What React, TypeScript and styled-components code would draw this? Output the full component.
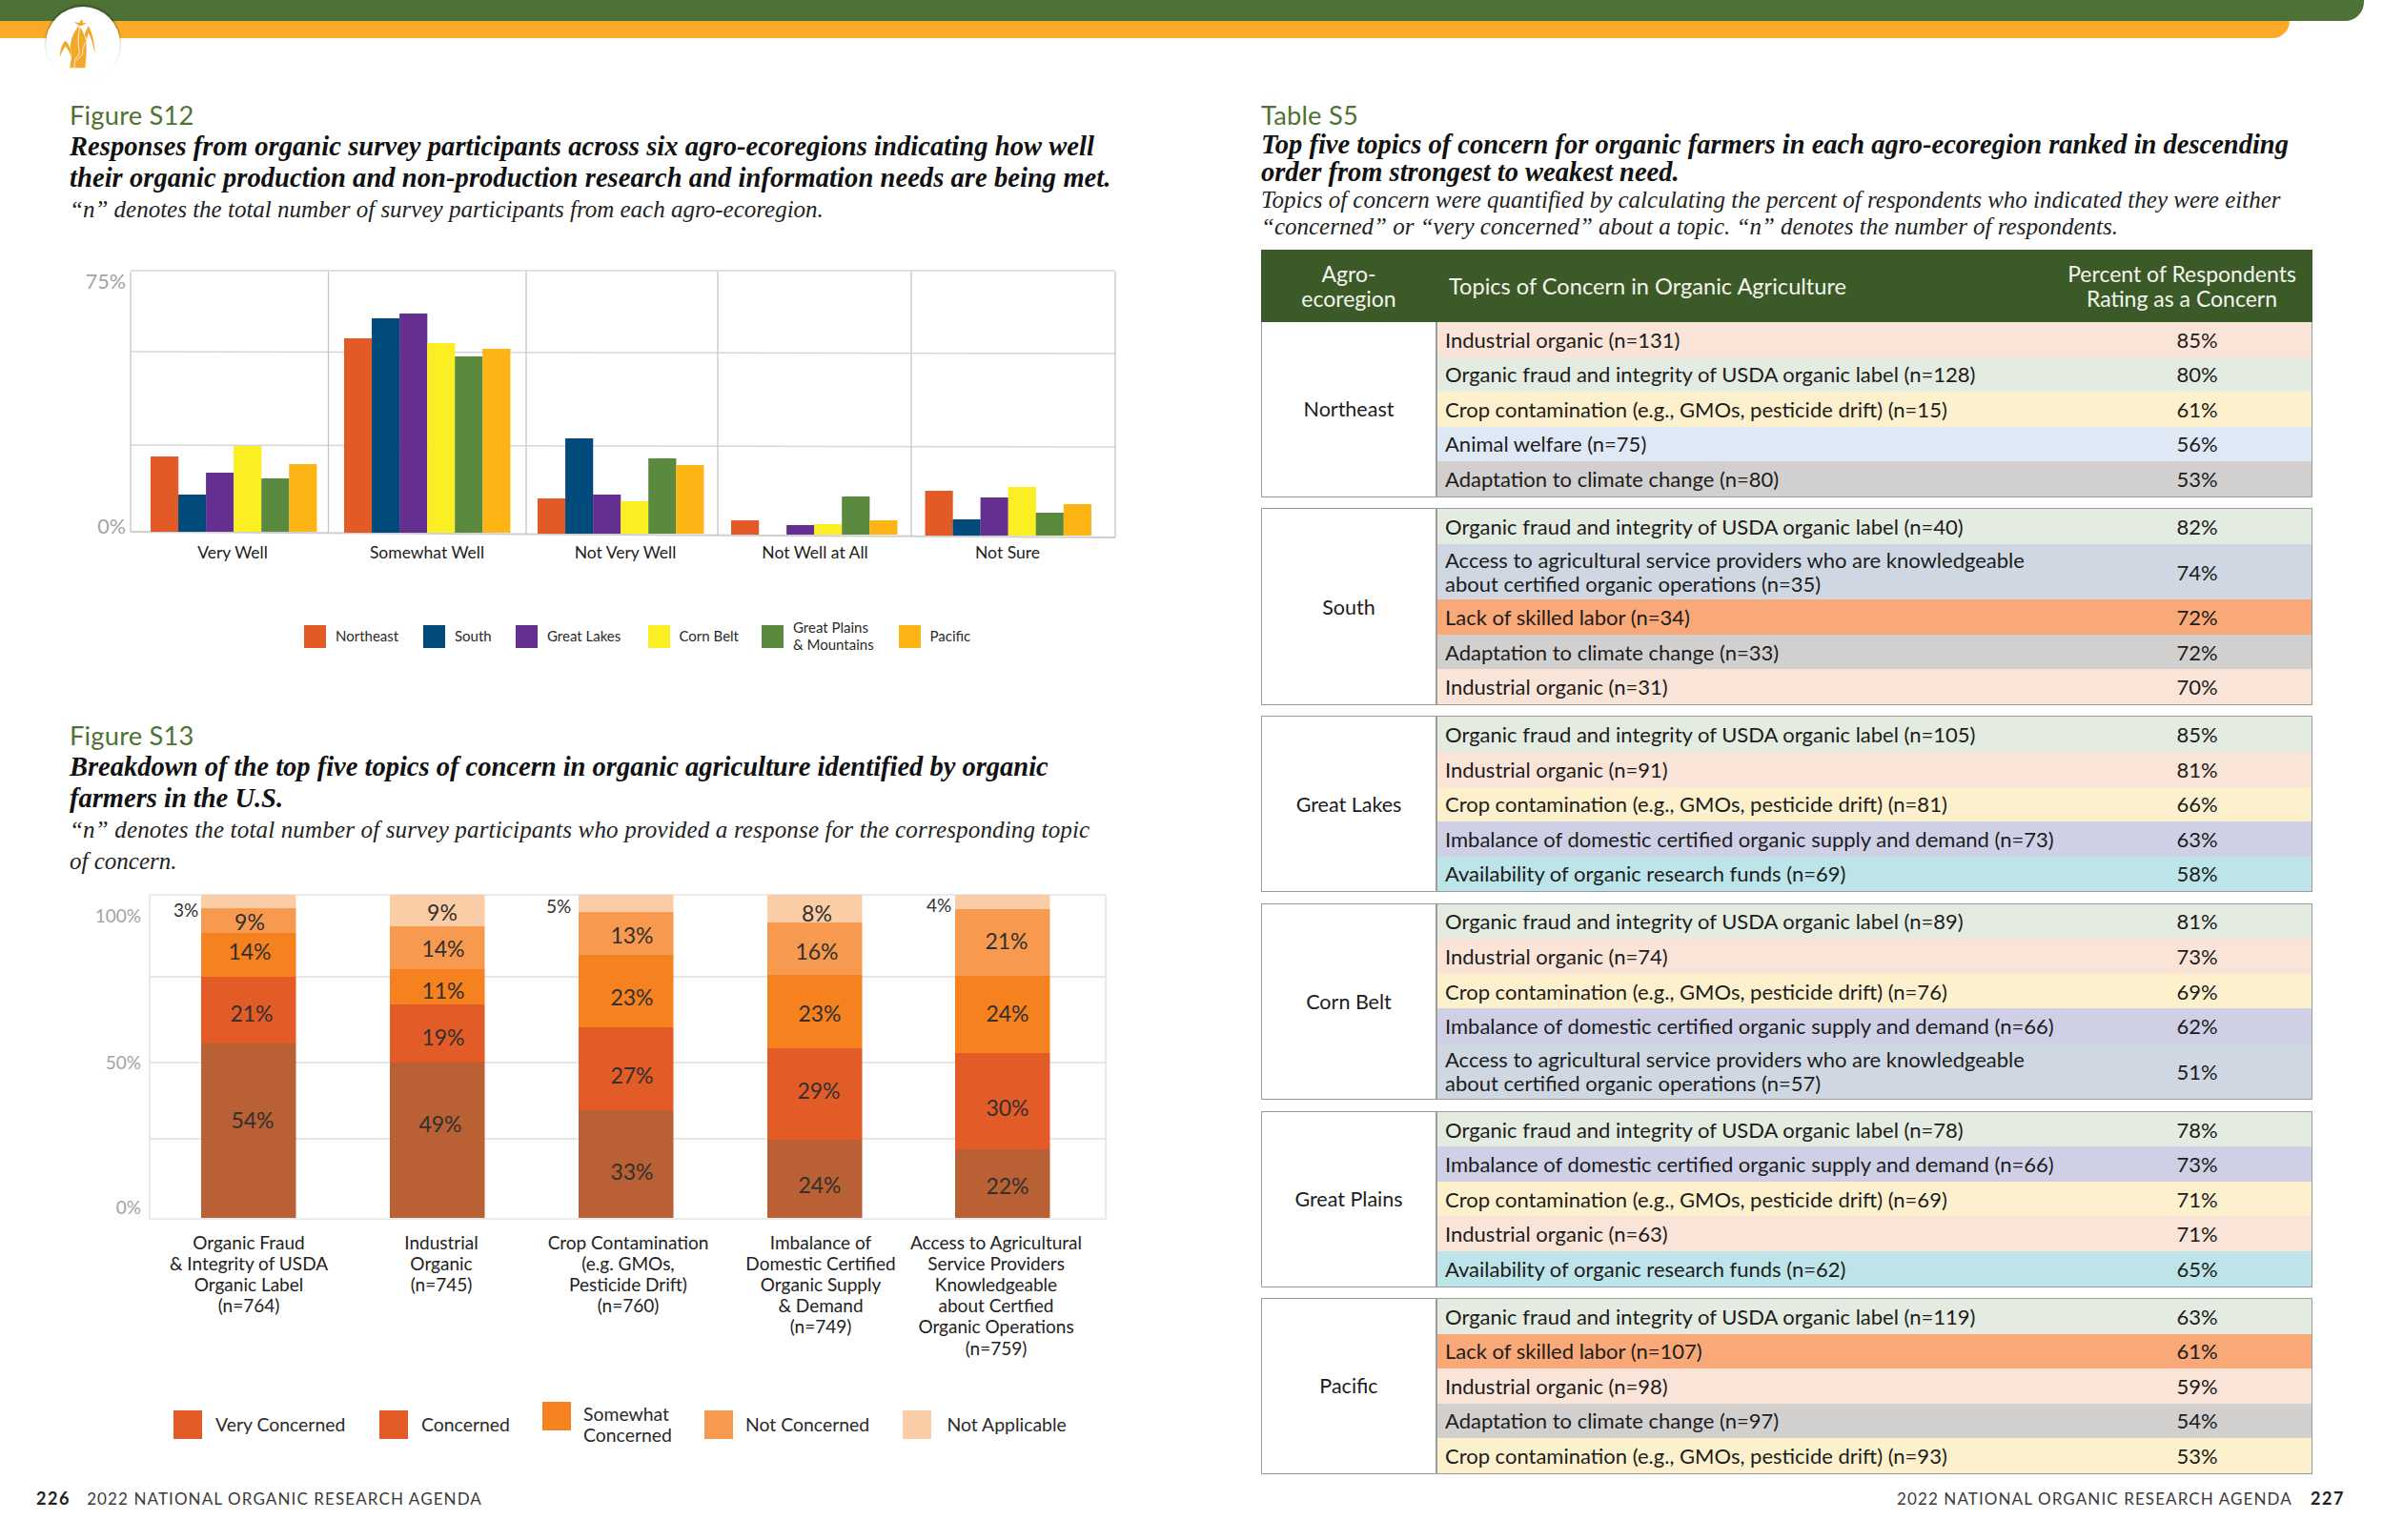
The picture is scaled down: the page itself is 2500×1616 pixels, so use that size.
import { FC } from 'react';
import styled, { createGlobalStyle } from 'styled-components';

const GlobalStyle = createGlobalStyle`
  html, body { margin: 0; padding: 0; background: #fff; }
  body { font-family: Lato, "Liberation Sans", sans-serif; color: #1c1c1c; }
`;

const Page = styled.div`
  width: 2500px;
  height: 1616px;
  overflow: hidden;
  position: relative;
  background: #fff;
`;

const TopBands = styled.header`
  height: 40px;
`;

const GreenBand = styled.div`
  width: 2480px;
  height: 22px;
  background: #4e7236;
  border-bottom-right-radius: 20px;
`;

const OrangeBand = styled.div`
  width: 2402px;
  height: 18px;
  background: #fbaa27;
  border-bottom-right-radius: 20px;
`;

const LogoBadge = styled.div`
  position: absolute;
  left: 48px;
  top: 7px;
  width: 78px;
  height: 78px;
  border-radius: 50%;
  background: #fff;
  box-shadow: 0 -2px 2px rgba(40, 50, 20, 0.5);
`;

const LogoMark = styled.svg`
  position: absolute;
  left: 60px;
  top: 20px;
  width: 43px;
  height: 53px;
`;

const Spreads = styled.div`
  display: grid;
  grid-template-columns: 1323px 1177px;
  height: 1576px;
`;

const LeftPage = styled.section`
  padding: 64px 0 0 73px;
  position: relative;
`;

const RightPage = styled.section`
  padding: 65px 0 0 0;
  width: 1103px;
  position: relative;
`;

const FigureTitle = styled.h2<{ $top?: number; $lh?: number }>`
  margin: ${(p) => p.$top ?? 0}px 0 0;
  font-size: 27.3px;
  line-height: ${(p) => p.$lh ?? 33}px;
  font-weight: 400;
  color: #4f7233;
  letter-spacing: 0.2px;
`;

const Lead = styled.p<{ $lh?: number; $spacing?: number }>`
  margin: 0;
  font-family: 'Liberation Serif', serif;
  font-style: italic;
  font-weight: 700;
  font-size: 28.5px;
  line-height: ${(p) => p.$lh ?? 33}px;
  letter-spacing: ${(p) => p.$spacing ?? 0}px;
  color: #111;
  white-space: nowrap;
`;

const Note = styled.p<{ $lh?: number; $spacing?: number }>`
  margin: 0;
  font-family: 'Liberation Serif', serif;
  font-style: italic;
  font-size: 25px;
  line-height: ${(p) => p.$lh ?? 33}px;
  letter-spacing: ${(p) => p.$spacing ?? 0}px;
  color: #222;
  white-space: nowrap;
`;

const ChartSvg = styled.svg<{ $top: number }>`
  display: block;
  overflow: visible;
  margin-top: ${(p) => p.$top}px;
`;

const YTick = styled.text<{ $size: number }>`
  font-family: Lato, sans-serif;
  font-size: ${(p) => p.$size}px;
  fill: #a3a3a3;
  text-anchor: end;
  dominant-baseline: central;
`;

const CategoryLabel = styled.text<{ $size: number }>`
  font-family: Lato, sans-serif;
  font-size: ${(p) => p.$size}px;
  fill: #222;
  text-anchor: middle;
  dominant-baseline: central;
`;

const ValueLabel = styled.text<{ $small?: boolean }>`
  font-family: Lato, sans-serif;
  font-size: ${(p) => (p.$small ? 19 : 23)}px;
  fill: #33302e;
  text-anchor: middle;
  dominant-baseline: central;
`;

const Legend = styled.div<{ $top: number; $left: number; $size: number }>`
  display: flex;
  align-items: center;
  margin: ${(p) => p.$top}px 0 0 ${(p) => p.$left}px;
  font-size: ${(p) => p.$size}px;
  color: #2a2a2a;
`;

const LegendItem = styled.div<{ $width: number; $gap: number }>`
  display: flex;
  align-items: center;
  gap: ${(p) => p.$gap}px;
  width: ${(p) => p.$width}px;
`;

const Swatch = styled.span<{ $color: string; $w: number; $h: number; $raised?: boolean }>`
  flex: none;
  width: ${(p) => p.$w}px;
  height: ${(p) => p.$h}px;
  background: ${(p) => p.$color};
  margin-bottom: ${(p) => (p.$raised ? 18 : 0)}px;
`;

const LegendText = styled.span<{ $lh: number }>`
  line-height: ${(p) => p.$lh}px;
  white-space: pre-line;
`;

const Footer = styled.footer<{ $right?: boolean }>`
  position: absolute;
  top: 1521px;
  display: flex;
  align-items: center;
  gap: 17px;
  font-size: 17px;
  letter-spacing: 1.1px;
  color: #3a3a3a;
  white-space: nowrap;
  ${(p) => (p.$right ? 'right: -34px; gap: 19px;' : 'left: 38px;')}
`;

const Folio = styled.b`
  font-weight: 700;
  font-size: 18px;
  color: #222;
  letter-spacing: 1.6px;
`;

const TableHead = styled.div`
  display: grid;
  grid-template-columns: 184px 1fr 240px;
  margin-top: 9.4px;
  height: 76px;
  background: #3c5a27;
  color: #f3f5ee;
  font-size: 23px;
  align-items: center;
`;

const HeadCell = styled.div<{ $center?: boolean }>`
  text-align: ${(p) => (p.$center ? 'center' : 'left')};
  padding-left: ${(p) => (p.$center ? 0 : 13)}px;
  line-height: 26px;
  white-space: pre-line;
`;

const TopicHead = styled(HeadCell)`
  font-size: 23.6px;
`;

const PercentHead = styled(HeadCell)`
  margin-left: -34px;
`;

const RegionGroup = styled.div<{ $first?: boolean }>`
  display: grid;
  grid-template-columns: 184px 1fr;
  border: 1.5px solid #9b9b9b;
  border-top-width: ${(p) => (p.$first ? 0 : 1.5)}px;
  margin-top: ${(p) => (p.$first ? 0 : 11.5)}px;
`;

const RegionName = styled.div`
  display: flex;
  align-items: center;
  justify-content: center;
  border-right: 2px solid #9b9b9b;
  font-size: 21.5px;
  color: #1c1c1c;
`;

const Rows = styled.div`
  display: flex;
  flex-direction: column;
`;

const Row = styled.div<{ $bg: string; $tall?: boolean }>`
  display: grid;
  grid-template-columns: 1fr 240px;
  align-items: center;
  height: ${(p) => (p.$tall ? 58.5 : 36.55)}px;
  background: ${(p) => p.$bg};
  font-size: 22px;
  color: #1c1c1c;
`;

const RowTopic = styled.div`
  padding-left: 8px;
  line-height: 25px;
  white-space: pre-line;
`;

const RowValue = styled.div`
  text-align: center;
`;

const TOPIC_BG = {
  industrial: '#fae3d7',
  fraud: '#e4ebe0',
  crop: '#fdf1cd',
  animal: '#dfe8f5',
  adaptation: '#d2cfcf',
  access: '#cfd8e2',
  labor: '#f9a877',
  imbalance: '#cfd0e6',
  funds: '#bde4e8',
};
type Topic = keyof typeof TOPIC_BG;

const topicLabel = (t: Topic, n: number) => {
  switch (t) {
    case 'industrial':
      return `Industrial organic (n=${n})`;
    case 'fraud':
      return `Organic fraud and integrity of USDA organic label (n=${n})`;
    case 'crop':
      return `Crop contamination (e.g., GMOs, pesticide drift) (n=${n})`;
    case 'animal':
      return `Animal welfare (n=${n})`;
    case 'adaptation':
      return `Adaptation to climate change (n=${n})`;
    case 'access':
      return `Access to agricultural service providers who are knowledgeable\nabout certified organic operations (n=${n})`;
    case 'labor':
      return `Lack of skilled labor (n=${n})`;
    case 'imbalance':
      return `Imbalance of domestic certified organic supply and demand (n=${n})`;
    default:
      return `Availability of organic research funds (n=${n})`;
  }
};

const REGIONS: Array<{ name: string; rows: Array<[Topic, number, number]> }> = [
  {
    name: 'Northeast',
    rows: [['industrial', 131, 85], ['fraud', 128, 80], ['crop', 15, 61], ['animal', 75, 56], ['adaptation', 80, 53]],
  },
  {
    name: 'South',
    rows: [['fraud', 40, 82], ['access', 35, 74], ['labor', 34, 72], ['adaptation', 33, 72], ['industrial', 31, 70]],
  },
  {
    name: 'Great Lakes',
    rows: [['fraud', 105, 85], ['industrial', 91, 81], ['crop', 81, 66], ['imbalance', 73, 63], ['funds', 69, 58]],
  },
  {
    name: 'Corn Belt',
    rows: [['fraud', 89, 81], ['industrial', 74, 73], ['crop', 76, 69], ['imbalance', 66, 62], ['access', 57, 51]],
  },
  {
    name: 'Great Plains',
    rows: [['fraud', 78, 78], ['imbalance', 66, 73], ['crop', 69, 71], ['industrial', 63, 71], ['funds', 62, 65]],
  },
  {
    name: 'Pacific',
    rows: [['fraud', 119, 63], ['labor', 107, 61], ['industrial', 98, 59], ['adaptation', 97, 54], ['crop', 93, 53]],
  },
];

const S12_COLORS = ['#e25b26', '#004a7c', '#642f90', '#fbee23', '#5a8a3e', '#fdb515'];
const S12_GROUPS = [
  { label: 'Very Well', cx: 244, x: 158, base: 558, heights: [79, 39, 62, 90, 56, 71] },
  { label: 'Somewhat Well', cx: 448, x: 361, base: 559, heights: [204, 225, 230, 199, 185, 193] },
  { label: 'Not Very Well', cx: 656, x: 564, base: 560, heights: [37, 100, 41, 34, 79, 72] },
  { label: 'Not Well at All', cx: 855, x: 767, base: 561, heights: [15, 0, 10, 11, 40, 15] },
  { label: 'Not Sure', cx: 1057, x: 970.5, base: 562, heights: [47, 17, 40, 51, 24, 33] },
];

const S12_LEGEND = [
  { label: 'Northeast', width: 125 },
  { label: 'South', width: 97 },
  { label: 'Great Lakes', width: 138.5 },
  { label: 'Corn Belt', width: 119.5 },
  { label: 'Great Plains\n& Mountains', width: 143.5 },
  { label: 'Pacific', width: 100 },
];

const S13_COLORS = ['#fbcda7', '#f79a4f', '#f5811f', '#e35b27', '#b96034'];
const S13_BARS = [
  {
    x: 211,
    cuts: [938, 952, 978, 1024, 1094, 1277],
    lines: ['Organic Fraud', '& Integrity of USDA', 'Organic Label', '(n=764)'],
    cx: 261,
    outside: ['3%', 195, 953],
    values: [['9%', 262, 966], ['14%', 262, 997], ['21%', 264, 1062], ['54%', 265, 1174]],
  },
  {
    x: 409,
    cuts: [938, 971, 1016, 1053, 1114, 1277],
    lines: ['Industrial', 'Organic', '(n=745)'],
    cx: 463,
    values: [['9%', 464, 956], ['14%', 465, 994], ['11%', 465, 1038], ['19%', 465, 1087], ['49%', 462, 1178]],
  },
  {
    x: 607,
    cuts: [938, 956, 1001, 1077, 1164, 1277],
    lines: ['Crop Contamination', '(e.g. GMOs,', 'Pesticide Drift)', '(n=760)'],
    cx: 659,
    outside: ['5%', 586, 949],
    values: [['13%', 663, 980], ['23%', 663, 1045], ['27%', 663, 1127], ['33%', 663, 1228]],
  },
  {
    x: 805,
    cuts: [938, 967, 1022, 1099, 1195, 1277],
    lines: ['Imbalance of', 'Domestic Certified', 'Organic Supply', '& Demand', '(n=749)'],
    cx: 861,
    values: [['8%', 857, 957], ['16%', 857, 997], ['23%', 860, 1062], ['29%', 859, 1143], ['24%', 860, 1242]],
  },
  {
    x: 1002,
    cuts: [938, 953, 1023, 1104, 1205, 1277],
    lines: ['Access to Agricultural', 'Service Providers', 'Knowledgeable', 'about Certfied', 'Organic Operations', '(n=759)'],
    cx: 1045,
    outside: ['4%', 985, 948],
    values: [['21%', 1056, 986], ['24%', 1057, 1062], ['30%', 1057, 1161], ['22%', 1057, 1243]],
  },
];

const S13_LEGEND = [
  { label: 'Very Concerned', color: '#e35b27', width: 216, gap: 14.5 },
  { label: 'Concerned', color: '#e35b27', width: 171, gap: 14.5 },
  { label: 'Somewhat\nConcerned', color: '#f5811f', width: 170, gap: 13.5, raised: true },
  { label: 'Not Concerned', color: '#f79a4f', width: 208, gap: 13.5 },
  { label: 'Not Applicable', color: '#fbcda7', width: 180, gap: 17 },
];

const SurveyChart: FC = () => (
  <ChartSvg $top={34} width={1110} height={325} viewBox="73 270 1110 325">
    {[[284, 284], [369, 371], [467, 469]].map(([a, b]) => (
      <line key={a} x1={137} y1={a} x2={1170} y2={b} stroke="#d6d6d6" strokeWidth={1.5} />
    ))}
    <line x1={137} y1={558} x2={1170} y2={564} stroke="#cfcfcf" strokeWidth={2} />
    {[[137, 558], [344.5, 559], [552, 561], [753, 562], [956, 563], [1170, 564]].map(([x, bottom]) => (
      <line key={x} x1={x} y1={285} x2={x} y2={bottom} stroke="#c6c6c6" strokeWidth={1.3} />
    ))}
    <YTick $size={21.5} x={132} y={295}>75%</YTick>
    <YTick $size={21.5} x={132} y={552}>0%</YTick>
    {S12_GROUPS.map((g) => (
      <g key={g.label}>
        {g.heights.map((h, i) => (
          <rect key={i} x={g.x + i * 29.05} y={g.base - h} width={29.2} height={h} fill={S12_COLORS[i]} />
        ))}
        <CategoryLabel $size={17.5} x={g.cx} y={579}>{g.label}</CategoryLabel>
      </g>
    ))}
  </ChartSvg>
);

const ConcernChart: FC = () => (
  <ChartSvg $top={11} width={1110} height={495} viewBox="73 930 1110 495">
    <rect x={157} y={938} width={1003} height={340} fill="none" stroke="#e4e4e4" strokeWidth={1.5} />
    {[1024, 1114, 1194].map((y) => (
      <line key={y} x1={157} y1={y} x2={1160} y2={y} stroke="#e6e6e6" strokeWidth={2} />
    ))}
    <YTick $size={19} x={148} y={959}>100%</YTick>
    <YTick $size={19} x={148} y={1113}>50%</YTick>
    <YTick $size={19} x={148} y={1265}>0%</YTick>
    {S13_BARS.map((b) => (
      <g key={b.x}>
        {S13_COLORS.map((c, i) => (
          <rect key={c} x={b.x} y={b.cuts[i]} width={99.5} height={b.cuts[i + 1] - b.cuts[i]} fill={c} />
        ))}
        {b.outside && (
          <ValueLabel $small x={b.outside[1]} y={b.outside[2]}>{b.outside[0]}</ValueLabel>
        )}
        {b.values.map(([text, x, y]) => (
          <ValueLabel key={text as string} x={x} y={y}>{text}</ValueLabel>
        ))}
        {b.lines.map((line, i) => (
          <CategoryLabel key={line} $size={19} x={b.cx} y={1302 + i * 22.2}>{line}</CategoryLabel>
        ))}
      </g>
    ))}
  </ChartSvg>
);

const CornLogo: FC = () => (
  <LogoMark viewBox="180 60 129 159">
    <g fill="#f3a72b">
      <path d="M233 69 L249 72 L257 61 L262 73 L273 72 L259 80 L249 81 Z" />
      <path d="M248 82 C232 100 222 125 222 145 C222 165 228 180 222 195 L220 214 L268 214 L272 170 L272 135 C268 112 258 92 248 82 Z" />
      <path d="M189 180 C188 156 196 136 206 128 C214 134 220 146 224 162 L224 178 C219 164 212 152 206 146 C199 154 193 166 189 180 Z" />
      <path d="M266 108 L277 82 C289 96 297 130 299 166 C293 142 286 116 278 104 L273 124 Z" />
    </g>
    <g fill="none" stroke="#fff" strokeWidth={2.4}>
      <path d="M250 84 L246 132 L250 168 L236 188 L234 214" />
      <path d="M270 132 L261 152 L259 172 L240 190" />
    </g>
  </LogoMark>
);

export default function App() {
  return (
    <Page>
      <GlobalStyle />
      <TopBands>
        <GreenBand />
        <OrangeBand />
      </TopBands>
      <LogoBadge />
      <CornLogo />
      <Spreads>
        <LeftPage>
          <FigureTitle>Figure S12</FigureTitle>
          <Lead $spacing={0.07}>Responses from organic survey participants across six agro-ecoregions indicating how well</Lead>
          <Lead $spacing={0.07}>their organic production and non-production research and information needs are being met.</Lead>
          <Note>“n” denotes the total number of survey participants from each agro-ecoregion.</Note>
          <SurveyChart />
          <Legend $top={55} $left={246} $size={15}>
            {S12_LEGEND.map((item, i) => (
              <LegendItem key={item.label} $width={item.width} $gap={10}>
                <Swatch $color={S12_COLORS[i]} $w={23} $h={24} />
                <LegendText $lh={17.5}>{item.label}</LegendText>
              </LegendItem>
            ))}
          </Legend>
          <FigureTitle $top={70}>Figure S13</FigureTitle>
          <Lead>Breakdown of the top five topics of concern in organic agriculture identified by organic</Lead>
          <Lead>farmers in the U.S.</Lead>
          <Note $spacing={0.165}>“n” denotes the total number of survey participants who provided a response for the corresponding topic</Note>
          <Note>of concern.</Note>
          <ConcernChart />
          <Legend $top={45} $left={109} $size={19.4}>
            {S13_LEGEND.map((item) => (
              <LegendItem key={item.label} $width={item.width} $gap={item.gap}>
                <Swatch $color={item.color} $w={29.5} $h={30} $raised={item.raised} />
                <LegendText $lh={22}>{item.label}</LegendText>
              </LegendItem>
            ))}
          </Legend>
          <Footer>
            <Folio>226</Folio>
            <span>2022 NATIONAL ORGANIC RESEARCH AGENDA</span>
          </Footer>
        </LeftPage>
        <RightPage>
          <FigureTitle $lh={32}>Table S5</FigureTitle>
          <Lead $lh={29.3}>Top five topics of concern for organic farmers in each agro-ecoregion ranked in descending</Lead>
          <Lead $lh={29.3}>order from strongest to weakest need.</Lead>
          <Note $lh={28.5}>Topics of concern were quantified by calculating the percent of respondents who indicated they were either</Note>
          <Note $lh={28.5}>“concerned” or “very concerned” about a topic. “n” denotes the number of respondents.</Note>
          <TableHead>
            <HeadCell $center>{'Agro-\necoregion'}</HeadCell>
            <TopicHead>Topics of Concern in Organic Agriculture</TopicHead>
            <PercentHead $center>{'Percent of Respondents\nRating as a Concern'}</PercentHead>
          </TableHead>
          {REGIONS.map((region, i) => (
            <RegionGroup key={region.name} $first={i === 0}>
              <RegionName>{region.name}</RegionName>
              <Rows>
                {region.rows.map(([topic, n, pct]) => (
                  <Row key={topic} $bg={TOPIC_BG[topic]} $tall={topic === 'access'}>
                    <RowTopic>{topicLabel(topic, n)}</RowTopic>
                    <RowValue>{pct}%</RowValue>
                  </Row>
                ))}
              </Rows>
            </RegionGroup>
          ))}
          <Footer $right>
            <span>2022 NATIONAL ORGANIC RESEARCH AGENDA</span>
            <Folio>227</Folio>
          </Footer>
        </RightPage>
      </Spreads>
    </Page>
  );
}
